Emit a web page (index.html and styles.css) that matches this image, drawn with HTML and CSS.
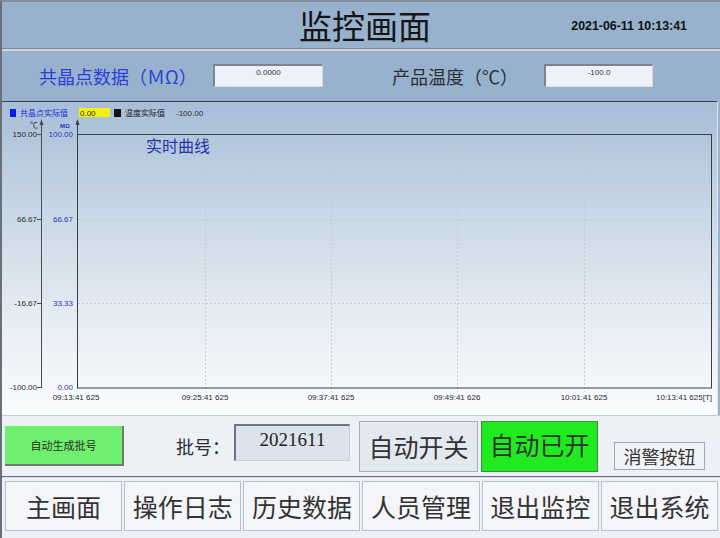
FILE: index.html
```html
<!DOCTYPE html>
<html lang="zh-CN">
<head>
<meta charset="utf-8">
<title>监控画面</title>
<link rel="stylesheet" href="styles.css">
</head>
<body>
<div class="screen">
  <header class="header">
    <h1 class="title">监控画面</h1>
    <div class="clock">2021-06-11 10:13:41</div>
  </header>

  <section class="params">
    <span class="spacer"></span>
    <span class="plabel blue">共晶点数据（ＭΩ）</span>
    <span class="field">0.0000</span>
    <span class="spacer"></span>
    <span class="plabel">产品温度（℃）</span>
    <span class="field">-100.0</span>
  </section>

  <section class="chart">
    <svg class="plot" viewBox="3 102 715 313" width="715" height="313" xmlns="http://www.w3.org/2000/svg">
      <!-- legend -->
      <rect x="11" y="109" width="6" height="8" fill="#0a1ee6"/>
      <text x="21" y="116" class="lg blue-t">共晶点实际值</text>
      <rect x="80" y="108" width="31" height="9" fill="#f4f20a"/>
      <text x="81" y="116" class="num">0.00</text>
      <rect x="115" y="109" width="7" height="8" fill="#111"/>
      <text x="126" y="116" class="lg">温度实际值</text>
      <text x="177" y="116" class="num">-100.00</text>

      <!-- grid -->
      <g stroke="#c2cbd6" stroke-dasharray="2 2" stroke-width="1">
        <line x1="79" y1="219.5" x2="712" y2="219.5"/>
        <line x1="79" y1="303.5" x2="712" y2="303.5"/>
        <line x1="206.5" y1="135" x2="206.5" y2="392"/>
        <line x1="332.5" y1="135" x2="332.5" y2="392"/>
        <line x1="458.5" y1="135" x2="458.5" y2="392"/>
        <line x1="585.5" y1="135" x2="585.5" y2="392"/>
      </g>

      <!-- plot box -->
      <rect x="78.5" y="134.5" width="634" height="253.5" fill="none" stroke="#3a3f46" stroke-width="1"/>

      <!-- temperature axis -->
      <line x1="42.5" y1="121" x2="42.5" y2="388" stroke="#4a4f56"/>
      <polygon points="40.5,125 42.5,119 44.5,125" fill="#4a4f56"/>
      <text x="31" y="128" class="unit">℃</text>
      <g stroke="#4a4f56">
        <line x1="38" y1="134.5" x2="42" y2="134.5"/>
        <line x1="38" y1="219.5" x2="42" y2="219.5"/>
        <line x1="38" y1="303.5" x2="42" y2="303.5"/>
        <line x1="38" y1="387.5" x2="42" y2="387.5"/>
      </g>
      <g class="num" text-anchor="end">
        <text x="38" y="137">150.00</text>
        <text x="38" y="222">66.67</text>
        <text x="38" y="306">-16.67</text>
        <text x="38" y="390">-100.00</text>
      </g>

      <!-- resistance axis -->
      <line x1="78.5" y1="121" x2="78.5" y2="388" stroke="#3a3f46"/>
      <polygon points="76.5,125 78.5,119 80.5,125" fill="#3a3f46"/>
      <text x="61" y="128" class="unit2">MΩ</text>
      <g class="num blue-n" text-anchor="end">
        <text x="74" y="137">100.00</text>
        <text x="74" y="222">66.67</text>
        <text x="74" y="306">33.33</text>
        <text x="74" y="390">0.00</text>
      </g>

      <text x="147" y="152" class="caption">实时曲线</text>

      <!-- time axis labels -->
      <g class="num" text-anchor="middle">
        <text x="77" y="400">09:13:41 625</text>
        <text x="206" y="400">09:25:41 625</text>
        <text x="332" y="400">09:37:41 625</text>
        <text x="458" y="400">09:49:41 626</text>
        <text x="585" y="400">10:01:41 625</text>
        <text x="713" y="400" text-anchor="end">10:13:41 625[T]</text>
      </g>
    </svg>
  </section>

  <section class="controls">
    <div class="ctrl-row">
      <button class="gen">自动生成批号</button>
      <span class="batch-label">批号：</span>
      <span class="batch">2021611</span>
      <button class="switch">自动开关</button>
      <button class="switch on">自动已开</button>
      <button class="alarm">消警按钮</button>
    </div>
    <nav class="nav">
      <button class="navbtn">主画面</button>
      <button class="navbtn">操作日志</button>
      <button class="navbtn">历史数据</button>
      <button class="navbtn">人员管理</button>
      <button class="navbtn">退出监控</button>
      <button class="navbtn">退出系统</button>
    </nav>
  </section>
</div>
</body>
</html>
```

FILE: styles.css
```css
* { box-sizing: border-box; }

html, body {
  margin: 0;
  padding: 0;
  width: 720px;
  height: 538px;
  overflow: hidden;
}

body {
  font-family: "Noto Sans CJK SC", "Liberation Sans", sans-serif;
  color: #222;
  background: #98b2ce;
}

.screen {
  width: 720px;
  height: 538px;
  display: flex;
  flex-direction: column;
  border-top: 2px solid #868d96;
  border-left: 2px solid #6a7079;
  background: #98b2ce;
}

/* header */
.header {
  height: 49px;
  flex: none;
  display: flex;
  align-items: center;
  border-bottom: 2px solid #cfd4d6;
  box-shadow: 0 -1px 0 #7f8a98 inset;
}

.title {
  margin: 0 0 0 297px;
  font-size: 33px;
  font-weight: normal;
  line-height: 1;
  color: #151515;
}

.clock {
  margin-left: auto;
  margin-right: 33px;
  font-family: "Liberation Sans", sans-serif;
  font-weight: bold;
  font-size: 12.4px;
  color: #111;
}

/* params row */
.params {
  height: 50px;
  flex: none;
  display: grid;
  grid-template-columns: 37px 174px 110px 69px 152px 109px 1fr;
  align-items: center;
  padding-bottom: 1px;
}

.plabel {
  font-size: 18px;
  line-height: 1;
  color: #2a2e36;
  white-space: nowrap;
}

.plabel.blue { color: #2d3fd6; }

.field {
  height: 23px;
  background: #eef1f7;
  border-top: 2px solid #7d848e;
  border-left: 2px solid #7d848e;
  border-right: 1px solid #d6dbe2;
  border-bottom: 1px solid #d6dbe2;
  font-family: "Liberation Sans", sans-serif;
  font-size: 8px;
  text-align: center;
  padding-top: 2px;
  color: #333;
}

/* chart */
.chart {
  height: 314px;
  flex: none;
  margin-right: 2px;
  border-top: 1px solid #39414b;
  border-right: 1px solid #dfe6ee;
  background: linear-gradient(to bottom, #a7bed8 0%, #c9d7e6 35%, #e6edf4 70%, #fbfcfd 100%);
}

.plot { display: block; }

.lg { font-family: "Noto Sans CJK SC", sans-serif; font-size: 8px; fill: #222; }
.blue-t { fill: #1f2fc8; }
.num { font-family: "Liberation Sans", sans-serif; font-size: 8px; fill: #2a2a2a; }
.blue-n { fill: #2a36b8; }
.unit { font-family: "Liberation Sans", sans-serif; font-size: 8px; fill: #333; }
.unit2 { font-family: "Liberation Sans", sans-serif; font-size: 6px; font-weight: bold; fill: #2a36b8; }
.caption { font-family: "Noto Sans CJK SC", sans-serif; font-size: 16px; fill: #2434a8; }

/* controls */
.controls {
  flex: 1;
  background: #edf0f5;
  border-top: 1px solid #c3c9d1;
  display: flex;
  flex-direction: column;
}

.ctrl-row {
  height: 61px;
  flex: none;
  display: flex;
  align-items: center;
  border-bottom: 1px solid #6c7178;
  box-shadow: 0 1px 0 #d6dbe2;
}

button {
  font-family: "Noto Sans CJK SC", sans-serif;
  padding: 0;
  margin: 0;
  cursor: pointer;
  line-height: 1;
}

.gen {
  margin-left: 3px;
  width: 119px;
  height: 40px;
  background: #6ef06e;
  border: none;
  border-right: 2px solid #707a72;
  border-bottom: 2px solid #707a72;
  font-size: 11px;
  color: #2a2a2a;
}

.batch-label {
  margin-left: 52px;
  font-size: 18px;
  line-height: 1;
  color: #2a2e36;
}

.batch {
  margin-left: 4px;
  margin-bottom: 8px;
  width: 116px;
  height: 37px;
  background: #dde3ec;
  border-top: 2px solid #6f7680;
  border-left: 2px solid #6f7680;
  border-right: 1px solid #c9cfd8;
  border-bottom: 1px solid #c9cfd8;
  font-family: "Liberation Serif", serif;
  font-size: 19px;
  line-height: 1;
  text-align: center;
  padding-top: 4px;
  color: #222;
}

.switch {
  margin-left: 9px;
  width: 119px;
  height: 51px;
  background: #e4e9f0;
  border: 1px solid #a3aec0;
  font-size: 25px;
  color: #333;
}

.switch.on {
  margin-left: 3px;
  width: 117px;
  background: #20ea20;
  border: 1px solid #3c8f3c;
  padding-bottom: 4px;
}

.alarm {
  margin-left: 16px;
  margin-top: 20px;
  width: 91px;
  height: 28px;
  background: #f1f3f7;
  border: 1px solid #9aa8c0;
  font-size: 18px;
  color: #333;
}

.nav {
  flex: 1;
  display: grid;
  grid-template-columns: repeat(6, 1fr);
  gap: 2px;
  padding: 4px 2px 0 3px;
  align-content: start;
}

.navbtn {
  height: 50px;
  background: #f3f5f8;
  border: 1px solid #b8c0cd;
  font-size: 25px;
  color: #333;
}
```
